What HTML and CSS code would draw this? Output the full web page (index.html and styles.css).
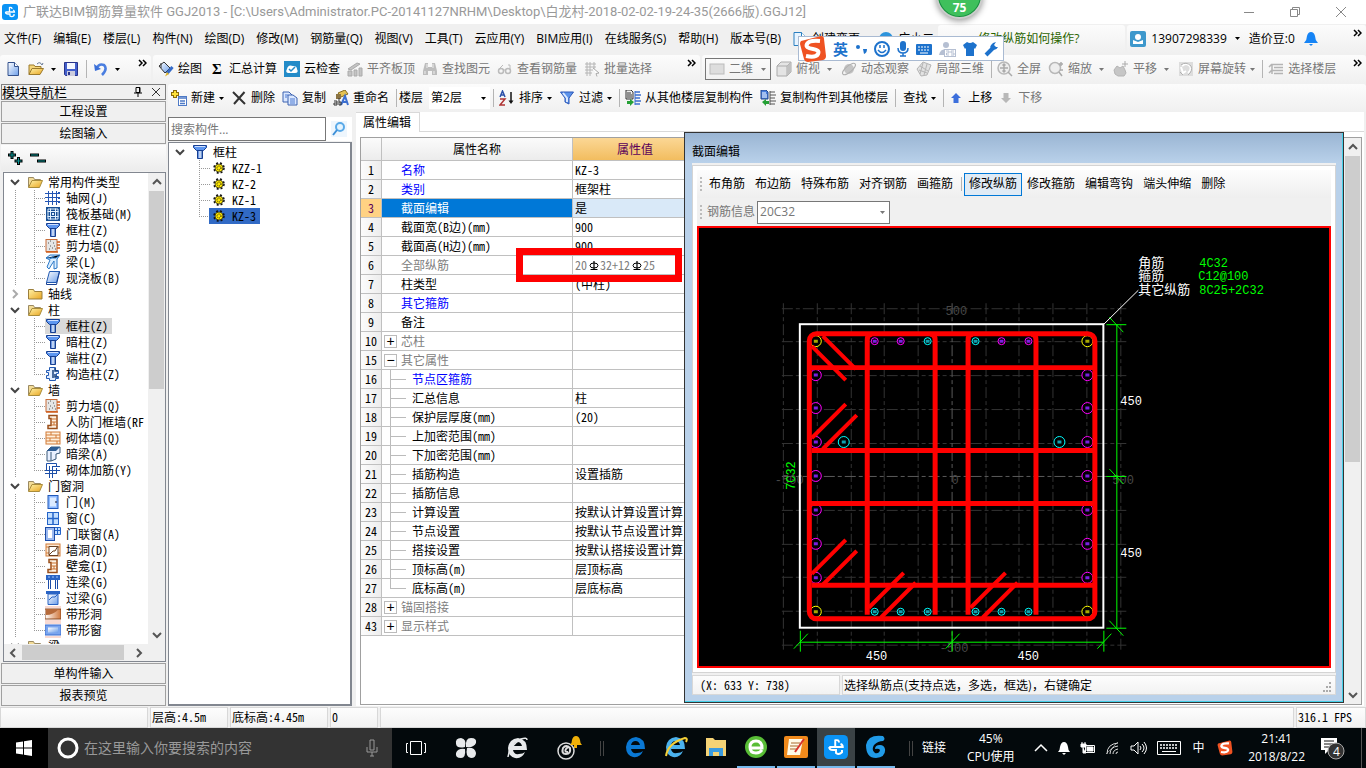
FILE: index.html
```html
<!DOCTYPE html>
<html lang="zh-CN">
<head>
    <meta charset="UTF-8">
    <meta name="viewport" content="width=device-width, initial-scale=1.0">
    <title>广联达BIM钢筋算量软件 GGJ2013</title>
    <link rel="stylesheet" href="styles.css">
</head>
<body>
    <!-- Shared icons -->
    <svg class="defs" width="0" height="0" aria-hidden="true">
        <defs>
            <linearGradient id="gBlue" x1="0" x2="1"><stop offset="0" stop-color="#1f5fd0"/><stop offset=".5" stop-color="#e6f0ff"/><stop offset="1" stop-color="#2c62b8"/></linearGradient>
            <linearGradient id="gGold" x1="0" x2="1" y1="0" y2="1"><stop offset="0" stop-color="#fff2a8"/><stop offset="1" stop-color="#e9a520"/></linearGradient>
            <linearGradient id="gSky" x1="0" x2="1" y1="0" y2="1"><stop offset="0" stop-color="#fff"/><stop offset="1" stop-color="#6d9fea"/></linearGradient>
            <linearGradient id="gBrick" x1="0" x2="1"><stop offset="0" stop-color="#fff"/><stop offset="1" stop-color="#d0763a"/></linearGradient>
        </defs>
        <symbol id="caret" viewBox="0 0 5 3"><path d="M0 0h5L2.500 3z" fill="currentColor"/></symbol>
        <symbol id="more" viewBox="0 0 9 8"><path d="M1 1l3 3-3 3M5 1l3 3-3 3" fill="none" stroke="#000" stroke-width="1.500"/></symbol>
        <symbol id="down" viewBox="0 0 10 10"><path d="M1 3l4 4 4-4" fill="none" stroke="currentColor" stroke-width="2"/></symbol>
        <symbol id="up" viewBox="0 0 10 10"><path d="M1 7l4-4 4 4" fill="none" stroke="currentColor" stroke-width="2"/></symbol>
        <symbol id="right" viewBox="0 0 10 10"><path d="M3 1l4 4-4 4" fill="none" stroke="currentColor" stroke-width="2"/></symbol>
        <symbol id="left" viewBox="0 0 10 10"><path d="M7 1L3 5l4 4" fill="none" stroke="currentColor" stroke-width="2"/></symbol>
        <symbol id="app" viewBox="0 0 16 16"><rect width="16" height="16" rx="3" fill="#0a93f5"/><path d="M7.500 3v5M7.500 3.500q2.500-.5 2.500 1.500M3.500 8h9q0-1.500-1.500-2M3.500 8q0 2 2.500 2h2v2q2 1.500 4-.5v-1.500" fill="none" stroke="#fff" stroke-width="1.300"/></symbol>
        <symbol id="new" viewBox="0 0 16 16"><path d="M3 1.500h6.500l4 4v9H3z" fill="url(#gSky)" stroke="#33518c"/><path d="M9.500 1.500v4h4" fill="#fff" stroke="#33518c"/></symbol>
        <symbol id="newplus" viewBox="0 0 16 16"><path d="M2 1.500h7.500l4 4v9H2z" fill="#e8f4ff" stroke="#2a7fc0"/><path d="M9.500 1.500v4h4" fill="#fff" stroke="#2a7fc0"/><path d="M6 11l5-4v8z" fill="#3bb02a"/></symbol>
        <symbol id="open" viewBox="0 0 16 16"><path d="M1 13.500V4h5l1 1.500h6v2" fill="#f5d67a" stroke="#9c7a2c"/><path d="M1 13.500L4 7.500h11.500L12 13.500z" fill="url(#gGold)" stroke="#9c7a2c"/><path d="M9 3q3-3 5 1l1-2" fill="none" stroke="#637795"/></symbol>
        <symbol id="save" viewBox="0 0 16 16"><path d="M1.500 1.500h13v13h-12l-1-1z" fill="#4360cc" stroke="#28338a"/><path d="M4 2h8v6H4z" fill="#f5f8ff"/><path d="M4 10h8v5H4z" fill="#ccd"/><path d="M5 11h2v3H5z" fill="#28338a"/></symbol>
        <symbol id="undo" viewBox="0 0 16 16"><path d="M4 8Q7 2 12 4q4 4-2 10" fill="none" stroke="#4a7ee0" stroke-width="2.500"/><path d="M2 3l1 7 6-2z" fill="#3a6fd8"/></symbol>
        <symbol id="paint" viewBox="0 0 16 16"><path d="M1 5l5-4 6 6-5 5z" fill="url(#gSky)" stroke="#333"/><path d="M3 2v5" stroke="#333"/><path d="M14.500 6L9 12.500" stroke="#356bc8" stroke-width="3"/><path d="M9 11l2 2-4 2.500z" fill="#e0b325"/></symbol>
        <symbol id="cloud" viewBox="0 0 16 16"><rect width="16" height="16" fill="#238bc8"/><path d="M4 12Q1 11 3 8q1-5 6-3 4 0 4 3 2 4-2 4z" fill="#fff"/><path d="M5 8l2 2 4-4" fill="none" stroke="#238bc8" stroke-width="1.500"/></symbol>
        <symbol id="align" viewBox="0 0 16 16"><path d="M1 8l9-6 3 1-9 6zM1 10h4v5H1zM7 9h3v6H7zM12 7h3v8h-3z" fill="#c4c4c4" stroke="#aaa"/></symbol>
        <symbol id="binoc" viewBox="0 0 16 16"><path d="M3 2h3v4h4V2h3l2 8v4h-5v-4H6v4H1v-4z" fill="#bdbdbd"/><path d="M3 10v3M12 10v3M5 3v4M11 3v4" stroke="#eee"/></symbol>
        <symbol id="glasses" viewBox="0 0 16 16"><circle cx="4" cy="10" r="2.500" fill="none" stroke="#bbb" stroke-width="1.500"/><circle cx="11" cy="10" r="2.500" fill="none" stroke="#bbb" stroke-width="1.500"/><path d="M6 9h3M2 8l4-4M13 9V4h-2" fill="none" stroke="#bbb"/></symbol>
        <symbol id="batch" viewBox="0 0 16 16"><path d="M1 3h11M1 6h11M1 9h8M1 12h7M3 1v14M6 1v14M10 1v7" stroke="#b4b4b4"/><path d="M9 7l6 5-3 .5 1 3" fill="#fff" stroke="#aaa"/></symbol>
        <symbol id="view2d" viewBox="0 0 16 16"><rect x="1" y="3" width="14" height="10" fill="#ddd" stroke="#bbb"/></symbol>
        <symbol id="cube" viewBox="0 0 16 16"><path d="M1 5l4-4h10v10l-4 4H1z" fill="#e4e4e4" stroke="#aaa"/><path d="M1 5h10v10M11 5l4-4" fill="none" stroke="#aaa"/><path d="M11 5l4-4v10l-4 4z" fill="#c0c0c0"/></symbol>
        <symbol id="orbit" viewBox="0 0 16 16"><circle cx="8" cy="8" r="5" fill="#c4c4c4"/><ellipse cx="8" cy="8" rx="8" ry="3" transform="rotate(-40 8 8)" fill="none" stroke="#b0b0b0"/></symbol>
        <symbol id="local3d" viewBox="0 0 16 16"><path d="M1 8l6-7 8 3-4 10-6 1z" fill="#e2e2e2" stroke="#b4b4b4"/><path d="M4 5l8 5M7 2L4 13M11 3L8 14M3 9l8 3" stroke="#b4b4b4"/></symbol>
        <symbol id="zoomfit" viewBox="0 0 16 16"><circle cx="7" cy="7" r="6" fill="#eee" stroke="#b8b8b8" stroke-width="1.500"/><path d="M11 11l4 4M7 3v8M3 7h8M5.500 4.500L7 3l1.500 1.500M5.500 9.500L7 11l1.500-1.500" stroke="#aaa" stroke-width="1.500" fill="none"/></symbol>
        <symbol id="zoom" viewBox="0 0 16 16"><circle cx="7" cy="7" r="5.500" fill="#eee" stroke="#b8b8b8" stroke-width="1.500"/><path d="M11 11l3 4M11 3h4M13 1v4M12 9h3" stroke="#aaa" stroke-width="1.500"/></symbol>
        <symbol id="pan" viewBox="0 0 16 16"><path d="M1 9l3-4 3 2 3-2 2 4 1 3-2 3H5l-3-2z" fill="#c6c6c6" stroke="#b4b4b4"/><path d="M12 0v6M9 3h6" stroke="#aaa"/></symbol>
        <symbol id="rotate" viewBox="0 0 16 16"><rect x="1" y="1" width="14" height="14" fill="#ddd"/><path d="M4 5q4-4 8 0 2 4-2 7M3 6l2 6 3-2" fill="none" stroke="#fff" stroke-width="2"/><path d="M3 4q5-4 10 1 2 5-3 9M2 11l3 3" fill="none" stroke="#b0b0b0"/></symbol>
        <symbol id="floors" viewBox="0 0 16 16"><path d="M4 3.500h11M6 6.500h9M4 9.500h11M6 12.500h9M4 3v10M1 6l3-3M1 12l3-3" stroke="#b4b4b4" stroke-width="1.500"/></symbol>
        <symbol id="create" viewBox="0 0 16 16"><path d="M4 0v8M0 4h8" stroke="#8a6c0c" stroke-width="4"/><path d="M4 1v6M1 4h6" stroke="#ffe23a" stroke-width="2"/><rect x="7.500" y="6.500" width="8" height="9" fill="#fff" stroke="#4e7ac6"/><path d="M7 8h9M9 11h5M9 13.500h5" stroke="#4e7ac6" stroke-width="1.500"/></symbol>
        <symbol id="delete" viewBox="0 0 16 16"><path d="M2 2l12 12M13.500 2L3 14" stroke="#333" stroke-width="2"/></symbol>
        <symbol id="copy" viewBox="0 0 16 16"><path d="M1 2h6l3 3v7H1z" fill="#dbe8ff" stroke="#3c62b0"/><path d="M6 5h5l4 3v7H6z" fill="#dbe8ff" stroke="#3c62b0"/><path d="M8 9h5M8 11h5M8 13h5M3 5h3M3 7h2" stroke="#4b78d0"/></symbol>
        <symbol id="rename" viewBox="0 0 16 16"><path d="M5 3l7-3 3 4-7 3z" fill="#e5c252" stroke="#846a1e"/><path d="M3 4h5v5H3z" fill="#8b7444"/><path d="M8 15l4-9 3 9M9.500 12h4" stroke="#3c6fd0" stroke-width="2" fill="none"/><path d="M1 11h3v4H1v-2h3M6 8v7h2v-3H6" fill="none" stroke="#333"/></symbol>
        <symbol id="sort" viewBox="0 0 16 16"><path d="M1 7l2.500-6L6 7M2 5h3" fill="none" stroke="#2d50a8" stroke-width="1.500"/><path d="M1 9h5l-5 6h5" fill="none" stroke="#b03434" stroke-width="1.500"/><path d="M12 2v10" stroke="#111" stroke-width="1.500"/><path d="M9.500 10.500h5L12 14z" fill="#111"/></symbol>
        <symbol id="filter" viewBox="0 0 16 16"><path d="M1.500 2h13L10 8v6l-4-2V8z" fill="#5c93ea" stroke="#2a56b8"/><path d="M4 3l4 5v4" fill="none" stroke="#dceaff" stroke-width="2"/></symbol>
        <symbol id="copyfrom" viewBox="0 0 16 16"><path d="M1 0h5l2 2v7H1z" fill="#eee" stroke="#333"/><path d="M2 3h4M2 5h5M2 7h5" stroke="#333"/><path d="M10 2h5M10 5h6M10 8h5M10 11h6M10 14h5" stroke="#3d70d0" stroke-width="1.500"/><path d="M10 1v14" stroke="#3d70d0"/><path d="M2 11h3v-2l4 3-4 4v-2H2z" fill="#25a035"/></symbol>
        <symbol id="copyto" viewBox="0 0 16 16"><path d="M1 0h5l2 2v7H1z" fill="#4a80e0" stroke="#24468a"/><path d="M2 3h4M2 5h5M2 7h5" stroke="#fff"/><path d="M10 2h5M10 5h6M10 8h5M10 11h6M10 14h5M10 1v14" stroke="#555"/><path d="M9 11H6V9l-4 3 4 4v-2h3z" fill="#25a035"/></symbol>
        <symbol id="arrowup" viewBox="0 0 12 12"><path d="M6 1l5 5H8.500v5h-5V6H1z" fill="currentColor"/></symbol>
        <symbol id="arrowdown" viewBox="0 0 12 12"><path d="M6 11L1 6h2.500V1h5v5H11z" fill="currentColor"/></symbol>
        <symbol id="folder" viewBox="0 0 16 16"><path d="M1.500 13V3.500h5l1 2h6V8" fill="#f3dc98" stroke="#9b8a62"/><path d="M1.500 13.500L5 6.500h10.500L12.500 13.500z" fill="url(#gGold)" stroke="#a98c3a"/></symbol>
        <symbol id="folderc" viewBox="0 0 16 16"><path d="M1.500 13V3.500h5l1 2h7.500V13z" fill="url(#gGold)" stroke="#9b7f3c"/></symbol>
        <symbol id="axis" viewBox="0 0 16 16"><path d="M0 3.500h14M0 7.500h14M0 11.500h14M3.500 1v14M7.500 1v14M11.500 1v14" stroke="#2456b4"/><path d="M13 2h2v2h-2zM13 7h2v2h-2zM13 11h2v2h-2z" fill="#2456b4"/></symbol>
        <symbol id="raft" viewBox="0 0 16 16"><rect x="1" y="1" width="14" height="14" fill="#184f94"/><path d="M2.500 5.500h11M2.500 10.500h11M5.500 2.500v11M10.500 2.500v11M3 3h10v10H3z" fill="none" stroke="#e2f2ff"/><rect x="7" y="7" width="2" height="2" fill="#e2f2ff"/></symbol>
        <symbol id="column" viewBox="0 0 16 16"><path d="M1.500 1.500h13v2l-3 3h-7l-3-3z" fill="#5d96f0" stroke="#173f92"/><path d="M3 2.500h10" stroke="#cfe0ff"/><path d="M5.500 6.500h5v8h-5z" fill="url(#gBlue)" stroke="#173f92"/></symbol>
        <symbol id="wall" viewBox="0 0 16 16"><rect x="1" y="1.500" width="11" height="12" fill="#e5e5e5" stroke="#c86d39"/><path d="M3 5h1M5 8h1M8 5h1M7 10h1M4 11h1M9 8h1M10 11h1M5 3h1" stroke="#555"/><path d="M12 4h3M12 7h3M12 10h3M1 14h12" stroke="#cf5d1c" stroke-width="1.500"/></symbol>
        <symbol id="beam" viewBox="0 0 16 16"><path d="M1 4l4-3h10l-3 4v9l-3 1V7L7 10l-3 5-2-2 3-7z" fill="#d9edff" stroke="#2b78c8"/><path d="M1 4h10l4-3M5 5l4-3" stroke="#2b78c8"/></symbol>
        <symbol id="slab" viewBox="0 0 16 16"><path d="M4.500 1.500h10l-3 11h-10z" fill="url(#gSky)" stroke="#2159b0"/><path d="M1.500 12.500v2h10l3-13" fill="none" stroke="#173f92"/></symbol>
        <symbol id="gz" viewBox="0 0 16 16"><path d="M4.500 1.500h6v3h3v3h-2v3h2v2h-3v2h-6v-2h-3v-3h2v-3h-2v-2h3z" fill="#e3eeff" stroke="#225ab4"/><path d="M10 2v3h3M10 8v3h3M8 4v8" fill="none" stroke="#17407e" stroke-width="1.500"/></symbol>
        <symbol id="rf" viewBox="0 0 16 16"><path d="M4 1.500h8v13H3v-3h3v-7H4z" fill="#fff3e4" stroke="#9a4f1b" stroke-width="1.500"/><path d="M6 5h6M6 8h6M6 11h6M9 8v3" stroke="#c8702e"/></symbol>
        <symbol id="brick" viewBox="0 0 16 16"><rect x="1" y="2" width="14" height="12" fill="#fff0dc" stroke="#d27b36"/><path d="M1 5h14M1 8h14M1 11h14M6 2v3M11 5v3M5 8v3M12 11v3" stroke="#d27b36"/></symbol>
        <symbol id="abeam" viewBox="0 0 16 16"><path d="M2 5l4-4h9v6l-4 1v5l-5 2H2z" fill="#e8f0ff" stroke="#385878"/><path d="M2 5l4-4h9l-4 4z" fill="#2f5d94"/><path d="M6 6v9" stroke="#385878"/></symbol>
        <symbol id="jj" viewBox="0 0 16 16"><path d="M0 8.500h15M0 11.500h12M4.500 4v12M7.500 4v12M11.500 6v6M1.500 1.500h10v3M1.500 1.500v7M8 4.500h7" fill="none" stroke="#1d4fa8"/></symbol>
        <symbol id="door" viewBox="0 0 16 16"><rect x="3" y="1.500" width="10" height="13" fill="#8cb9ff" stroke="#2159b8"/><rect x="5" y="3.500" width="6" height="9" fill="#dcebff"/><path d="M10 8h2" stroke="#112"/></symbol>
        <symbol id="window" viewBox="0 0 16 16"><rect x="2.500" y="2.500" width="11" height="12" fill="#c3dfff" stroke="#2464c8"/><path d="M8 2v13M3 8.500h10" stroke="#2464c8" stroke-width="1.500"/></symbol>
        <symbol id="doorwin" viewBox="0 0 16 16"><path d="M9 1.500h6.500v7H9z" fill="#c3dfff" stroke="#2464c8"/><path d="M12.500 2v6M9 4.500h6" stroke="#2464c8"/><rect x=".5" y="1.500" width="9" height="13" fill="#9bb9f0" stroke="#1c4ca8"/><rect x="3" y="4" width="4" height="8" fill="#fff"/></symbol>
        <symbol id="hole" viewBox="0 0 16 16"><rect x="1" y="2" width="14" height="12" fill="#fce8d2" stroke="#d27b36"/><path d="M1 5h14M1 11h14" stroke="#d27b36"/><path d="M4 4.500h9v9H4zM4 13l4-4h2l3-5" fill="#fff" stroke="#6a4022"/></symbol>
        <symbol id="link" viewBox="0 0 16 16"><path d="M1 1h14v5H1z" fill="#2a64c4"/><path d="M3 3h2M7 3h2M11 3h2" stroke="#9cc4ff"/><path d="M3.500 6v9M5.500 6v9M10.500 6v9M12.500 6v9" stroke="#1c4ca8"/></symbol>
        <symbol id="lintel" viewBox="0 0 16 16"><path d="M1 1h14v3H1z" fill="#2a64c4"/><path d="M3 4h10v10.500H3z" fill="url(#gSky)" stroke="#2a64c4"/><path d="M4 10l3-3h3l3-3" fill="none" stroke="#2a64c4"/></symbol>
        <symbol id="striphole" viewBox="0 0 16 16"><rect x="0" y="3" width="16" height="10" fill="url(#gBrick)" stroke="#8d491f"/><path d="M1 9Q8 9 14 3H1z" fill="#b66a3a"/><path d="M0 1h16M0 15h16" stroke="#f3b5a5"/></symbol>
        <symbol id="stripwin" viewBox="0 0 16 16"><rect x="0" y="3" width="16" height="10" fill="#7aa5ee" stroke="#3c6fd0"/><rect x="3" y="5.500" width="10" height="5" fill="url(#gSky)"/><path d="M0 1h16M0 15h16" stroke="#f3b5a5"/></symbol>
        <symbol id="gear" viewBox="0 0 12 12"><circle cx="6" cy="6" r="5" fill="none" stroke="#111" stroke-width="1.500" stroke-dasharray="2 2"/><circle cx="6" cy="6" r="4" fill="#ffe800" stroke="#111" stroke-width=".7"/><circle cx="6" cy="6" r="2" fill="none" stroke="#111" stroke-dasharray="1 1"/></symbol>
        <symbol id="rebar" viewBox="0 0 10 10"><ellipse cx="5" cy="4.500" rx="4" ry="2.500" fill="none" stroke="#000"/><path d="M5 0v9M1.500 8.500h7" stroke="#000" stroke-width="1.200"/></symbol>
        <symbol id="sogou" viewBox="0 0 28 28"><path d="M2 6L22 1q3 0 3 3l2 17q0 3-3 4L9 27q-3 0-4-3L1 9q0-2 1-3z" fill="#ef5222"/><path d="M21 6Q10 5 8 9t6 5q7 1 5 5t-12 2" fill="none" stroke="#fff" stroke-width="4"/></symbol>
        <symbol id="ebrowser" viewBox="0 0 24 24"><path d="M21 14H7q1 5 6 4 4 0 6-2-3 7-10 6-7-2-7-10Q3 3 12 2q9 1 9 12zM7 10h9q-1-4-4.500-4T7 10z" fill="currentColor"/></symbol>
    </svg>

    <header class="titlebar">
        <svg class="app-icon"><use href="#app"/></svg>
        <span class="title-text">广联达BIM钢筋算量软件 GGJ2013 - [C:\Users\Administrator.PC-20141127NRHM\Desktop\白龙村-2018-02-02-19-24-35(2666版).GGJ12]</span>
        <div class="window-buttons">
            <button aria-label="最小化"><svg width="12" height="12"><path d="M1 6.500h10" stroke="#888"/></svg></button>
            <button aria-label="还原"><svg width="12" height="12"><path d="M1.500 3.500h7v7h-7zM3.500 3V1.500h7v7H9" fill="none" stroke="#888"/></svg></button>
            <button aria-label="关闭"><svg width="12" height="12"><path d="M1 1l10 10M11 1L1 11" stroke="#888"/></svg></button>
        </div>
    </header>

    <div class="menubar">
        <nav class="menu">
            <button>文件(F)</button><button>编辑(E)</button><button>楼层(L)</button><button>构件(N)</button><button>绘图(D)</button><button>修改(M)</button><button>钢筋量(Q)</button><button>视图(V)</button><button>工具(T)</button><button>云应用(Y)</button><button>BIM应用(I)</button><button>在线服务(S)</button><button>帮助(H)</button><button>版本号(B)</button>
        </nav>
        <button class="tool"><svg class="ic"><use href="#newplus"/></svg>创建变更</button>
        <button class="tool helper"><svg class="ic"><circle cx="8" cy="8" r="7" fill="#2d94dc"/><path d="M4 8h3M9 8h3" stroke="#fff" stroke-width="2"/></svg>广小二</button>
        <div class="strip question"><a href="#">修改纵筋如何操作?</a></div>
        <div class="strip account">
            <button class="tool"><svg class="ic"><rect width="16" height="16" rx="2" fill="#3d98cc"/><circle cx="8" cy="6" r="3" fill="#fff"/><path d="M3 13V9l5 2 5-2v4z" fill="#fff"/></svg>13907298339<svg class="caret"><use href="#caret"/></svg></button>
            <span class="beans">造价豆:0</span>
            <svg class="ic"><path d="M1 12q3-3 3-7 1-4 4-4t4 4q0 4 3 7zM6 13h4l-2 2z" fill="#1684f5"/></svg>
            <button class="overflow" aria-label="更多"><svg class="more"><use href="#more"/></svg></button>
        </div>
    </div>

    <div class="toolbars">
        <div class="strip files">
            <button class="tool" aria-label="新建工程"><svg class="ic"><use href="#new"/></svg></button>
            <button class="tool" aria-label="打开"><svg class="ic"><use href="#open"/></svg><svg class="caret"><use href="#caret"/></svg></button>
            <button class="tool" aria-label="保存"><svg class="ic"><use href="#save"/></svg></button>
            <span class="sep"></span>
            <button class="tool" aria-label="撤销"><svg class="ic"><use href="#undo"/></svg><svg class="caret"><use href="#caret"/></svg></button>
            <button class="overflow" aria-label="更多"><svg class="more"><use href="#more"/></svg></button>
        </div>
        <div class="strip draw">
            <button class="tool"><svg class="ic"><use href="#paint"/></svg>绘图</button>
            <button class="tool"><b class="sigma">Σ</b>汇总计算</button>
            <button class="tool"><svg class="ic"><use href="#cloud"/></svg>云检查</button>
            <button class="tool off"><svg class="ic"><use href="#align"/></svg>平齐板顶</button>
            <button class="tool off"><svg class="ic"><use href="#binoc"/></svg>查找图元</button>
            <button class="tool off"><svg class="ic"><use href="#glasses"/></svg>查看钢筋量</button>
            <button class="tool off"><svg class="ic"><use href="#batch"/></svg>批量选择</button>
            <button class="overflow" aria-label="更多"><svg class="more"><use href="#more"/></svg></button>
        </div>
        <div class="strip view">
            <button class="tool off boxed"><svg class="ic"><use href="#view2d"/></svg>二维<svg class="caret"><use href="#caret"/></svg></button>
            <button class="tool off"><svg class="ic"><use href="#cube"/></svg>俯视<svg class="caret wide"><use href="#caret"/></svg></button>
            <button class="tool off"><svg class="ic"><use href="#orbit"/></svg>动态观察</button>
            <button class="tool off"><svg class="ic"><use href="#local3d"/></svg>局部三维</button>
            <span class="sep"></span>
            <button class="tool off"><svg class="ic"><use href="#zoomfit"/></svg>全屏</button>
            <button class="tool off"><svg class="ic"><use href="#zoom"/></svg>缩放<svg class="caret wide"><use href="#caret"/></svg></button>
            <button class="tool off"><svg class="ic"><use href="#pan"/></svg>平移<svg class="caret wide"><use href="#caret"/></svg></button>
            <button class="tool off"><svg class="ic"><use href="#rotate"/></svg>屏幕旋转<svg class="caret"><use href="#caret"/></svg></button>
            <span class="sep"></span>
            <button class="tool off"><svg class="ic"><use href="#floors"/></svg>选择楼层</button>
            <button class="overflow" aria-label="更多"><svg class="more"><use href="#more"/></svg></button>
        </div>
    </div>

    <main class="workspace">
        <aside class="dock">
            <div class="dock-title">模块导航栏
                <svg width="10" height="12"><path d="M3 1.500h4v5H3zM1 7h8M5 7v4M6.500 2v4" fill="none" stroke="#000"/></svg>
                <svg width="10" height="12"><path d="M1 2l8 8M9 2l-8 8" stroke="#333"/></svg>
            </div>
            <button class="dock-tab">工程设置</button>
            <button class="dock-tab">绘图输入</button>
            <div class="dock-tools">
                <button aria-label="展开"><svg width="16" height="16"><path d="M5 1v8M1 5h8M11.500 7v8M7.500 11h8" stroke="#000" stroke-width="3"/><path d="M5 2v6M2 5h6M11.500 8v6M8.500 11h6" stroke="#089090"/></svg></button>
                <button aria-label="折叠"><svg width="18" height="16"><path d="M1 5h9M8 11h9" stroke="#000" stroke-width="3"/><path d="M2 5h7M9 11h7" stroke="#089090"/></svg></button>
            </div>
            <div class="tree-box">
                <div class="tree-view">
                    <ul class="tree">
                        <li><a href="#"><svg class="exp"><use href="#down"/></svg><svg class="ic"><use href="#folder"/></svg>常用构件类型</a>
                            <ul>
                                <li><a href="#"><svg class="ic"><use href="#axis"/></svg>轴网(J)</a></li>
                                <li><a href="#"><svg class="ic"><use href="#raft"/></svg>筏板基础(M)</a></li>
                                <li><a href="#"><svg class="ic"><use href="#column"/></svg>框柱(Z)</a></li>
                                <li><a href="#"><svg class="ic"><use href="#wall"/></svg>剪力墙(Q)</a></li>
                                <li><a href="#"><svg class="ic"><use href="#beam"/></svg>梁(L)</a></li>
                                <li><a href="#"><svg class="ic"><use href="#slab"/></svg>现浇板(B)</a></li>
                            </ul>
                        </li>
                        <li><a href="#"><svg class="exp closed"><use href="#right"/></svg><svg class="ic"><use href="#folderc"/></svg>轴线</a></li>
                        <li><a href="#"><svg class="exp"><use href="#down"/></svg><svg class="ic"><use href="#folder"/></svg>柱</a>
                            <ul>
                                <li><a href="#" class="current"><svg class="ic"><use href="#column"/></svg>框柱(Z)</a></li>
                                <li><a href="#"><svg class="ic"><use href="#column"/></svg>暗柱(Z)</a></li>
                                <li><a href="#"><svg class="ic"><use href="#column"/></svg>端柱(Z)</a></li>
                                <li><a href="#"><svg class="ic"><use href="#gz"/></svg>构造柱(Z)</a></li>
                            </ul>
                        </li>
                        <li><a href="#"><svg class="exp"><use href="#down"/></svg><svg class="ic"><use href="#folder"/></svg>墙</a>
                            <ul>
                                <li><a href="#"><svg class="ic"><use href="#wall"/></svg>剪力墙(Q)</a></li>
                                <li><a href="#"><svg class="ic"><use href="#rf"/></svg>人防门框墙(RF</a></li>
                                <li><a href="#"><svg class="ic"><use href="#brick"/></svg>砌体墙(Q)</a></li>
                                <li><a href="#"><svg class="ic"><use href="#abeam"/></svg>暗梁(A)</a></li>
                                <li><a href="#"><svg class="ic"><use href="#jj"/></svg>砌体加筋(Y)</a></li>
                            </ul>
                        </li>
                        <li><a href="#"><svg class="exp"><use href="#down"/></svg><svg class="ic"><use href="#folder"/></svg>门窗洞</a>
                            <ul>
                                <li><a href="#"><svg class="ic"><use href="#door"/></svg>门(M)</a></li>
                                <li><a href="#"><svg class="ic"><use href="#window"/></svg>窗(C)</a></li>
                                <li><a href="#"><svg class="ic"><use href="#doorwin"/></svg>门联窗(A)</a></li>
                                <li><a href="#"><svg class="ic"><use href="#hole"/></svg>墙洞(D)</a></li>
                                <li><a href="#"><svg class="ic"><use href="#rf"/></svg>壁龛(I)</a></li>
                                <li><a href="#"><svg class="ic"><use href="#link"/></svg>连梁(G)</a></li>
                                <li><a href="#"><svg class="ic"><use href="#lintel"/></svg>过梁(G)</a></li>
                                <li><a href="#"><svg class="ic"><use href="#striphole"/></svg>带形洞</a></li>
                                <li><a href="#"><svg class="ic"><use href="#stripwin"/></svg>带形窗</a></li>
                            </ul>
                        </li>
                        <li><a href="#"><svg class="exp"><use href="#down"/></svg><svg class="ic"><use href="#folder"/></svg>梁</a></li>
                    </ul>
                    <div class="vscroll"><svg class="arrow"><use href="#up"/></svg><div class="thumb"></div><svg class="arrow"><use href="#down"/></svg></div>
                </div>
                <div class="hscroll"><svg class="arrow"><use href="#left"/></svg><div class="thumb"></div><svg class="arrow"><use href="#right"/></svg></div>
            </div>
            <button class="dock-tab">单构件输入</button>
            <button class="dock-tab">报表预览</button>
        </aside>

        <section class="content">
            <div class="strip component-tools">
                <button class="tool"><svg class="ic"><use href="#create"/></svg>新建<svg class="caret"><use href="#caret"/></svg></button>
                <button class="tool"><svg class="ic"><use href="#delete"/></svg>删除</button>
                <button class="tool"><svg class="ic"><use href="#copy"/></svg>复制</button>
                <button class="tool"><svg class="ic"><use href="#rename"/></svg>重命名</button>
                <span class="sep"></span>
                <label for="floor">楼层</label>
                <span class="combo floor-combo"><select id="floor"><option>第2层</option></select><svg class="caret"><use href="#caret"/></svg></span>
                <span class="sep"></span>
                <button class="tool"><svg class="ic"><use href="#sort"/></svg>排序<svg class="caret"><use href="#caret"/></svg></button>
                <button class="tool"><svg class="ic"><use href="#filter"/></svg>过滤<svg class="caret"><use href="#caret"/></svg></button>
                <span class="sep"></span>
                <button class="tool"><svg class="ic"><use href="#copyfrom"/></svg>从其他楼层复制构件</button>
                <button class="tool"><svg class="ic"><use href="#copyto"/></svg>复制构件到其他楼层</button>
                <span class="sep"></span>
                <button class="tool find">查找<svg class="caret"><use href="#caret"/></svg></button>
                <span class="sep"></span>
                <button class="tool move"><svg class="ic12 blue"><use href="#arrowup"/></svg>上移</button>
                <button class="tool move off"><svg class="ic12 grey"><use href="#arrowdown"/></svg>下移</button>
            </div>

            <div class="panels">
                <div class="component-panel">
                    <div class="search">
                        <input type="text" placeholder="搜索构件..." aria-label="搜索构件">
                        <button aria-label="搜索"><svg class="ic"><rect width="16" height="16" fill="#eef6fd"/><circle cx="9" cy="6" r="4" fill="#e4f4ff" stroke="#59a9e8" stroke-width="2"/><path d="M6 9l-4 5" stroke="#3c8fd8" stroke-width="2"/></svg></button>
                    </div>
                    <ul class="tree component-tree">
                        <li><a href="#"><svg class="exp"><use href="#down"/></svg><svg class="ic"><use href="#column"/></svg>框柱</a>
                            <ul>
                                <li><a href="#"><svg class="ic12"><use href="#gear"/></svg>KZZ-1</a></li>
                                <li><a href="#"><svg class="ic12"><use href="#gear"/></svg>KZ-2</a></li>
                                <li><a href="#"><svg class="ic12"><use href="#gear"/></svg>KZ-1</a></li>
                                <li><a href="#" class="picked"><svg class="ic12"><use href="#gear"/></svg>KZ-3</a></li>
                            </ul>
                        </li>
                    </ul>
                </div>

                <div class="property-panel">
                    <div class="tabs"><button class="tab">属性编辑</button></div>
                    <div class="property-body">
                        <div class="sheet">
                            <table class="props">
                                <thead>
                                    <tr><th class="num"></th><th>属性名称</th><th class="active">属性值</th></tr>
                                </thead>
                                <tbody>
                                    <tr><th>1</th><td class="blue">名称</td><td>KZ-3</td></tr>
                                    <tr><th>2</th><td class="blue">类别</td><td>框架柱</td></tr>
                                    <tr class="selected"><th>3</th><td>截面编辑</td><td>是</td></tr>
                                    <tr><th>4</th><td>截面宽(B边)(mm)</td><td>900</td></tr>
                                    <tr><th>5</th><td>截面高(H边)(mm)</td><td>900</td></tr>
                                    <tr class="dim"><th>6</th><td>全部纵筋</td><td>20<svg class="rebar"><use href="#rebar"/></svg>32+12<svg class="rebar"><use href="#rebar"/></svg>25</td></tr>
                                    <tr><th>7</th><td>柱类型</td><td>(中柱)</td></tr>
                                    <tr><th>8</th><td class="blue">其它箍筋</td><td></td></tr>
                                    <tr><th>9</th><td>备注</td><td></td></tr>
                                    <tr class="parent"><th>10</th><td><button>+</button>芯柱</td><td></td></tr>
                                    <tr class="parent"><th>15</th><td><button>−</button>其它属性</td><td></td></tr>
                                    <tr class="sub"><th>16</th><td class="blue">节点区箍筋</td><td></td></tr>
                                    <tr class="sub"><th>17</th><td>汇总信息</td><td>柱</td></tr>
                                    <tr class="sub"><th>18</th><td>保护层厚度(mm)</td><td>(20)</td></tr>
                                    <tr class="sub"><th>19</th><td>上加密范围(mm)</td><td></td></tr>
                                    <tr class="sub"><th>20</th><td>下加密范围(mm)</td><td></td></tr>
                                    <tr class="sub"><th>21</th><td>插筋构造</td><td>设置插筋</td></tr>
                                    <tr class="sub"><th>22</th><td>插筋信息</td><td></td></tr>
                                    <tr class="sub"><th>23</th><td>计算设置</td><td>按默认计算设置计算</td></tr>
                                    <tr class="sub"><th>24</th><td>节点设置</td><td>按默认节点设置计算</td></tr>
                                    <tr class="sub"><th>25</th><td>搭接设置</td><td>按默认搭接设置计算</td></tr>
                                    <tr class="sub"><th>26</th><td>顶标高(m)</td><td>层顶标高</td></tr>
                                    <tr class="sub last"><th>27</th><td>底标高(m)</td><td>层底标高</td></tr>
                                    <tr class="parent"><th>28</th><td><button>+</button>锚固搭接</td><td></td></tr>
                                    <tr class="parent"><th>43</th><td><button>+</button>显示样式</td><td></td></tr>
                                </tbody>
                            </table>
                            <div class="mark"></div>
                        </div>
                        <div class="vscroll long"><svg class="arrow"><use href="#up"/></svg><div class="thumb"></div><svg class="arrow"><use href="#down"/></svg></div>
                    </div>
                </div>
            </div>
        </section>
    </main>

    <footer class="statusbar">
        <span class="cell s1"></span><span class="cell s2">层高:4.5m</span><span class="cell s3">底标高:4.45m</span><span class="cell s4">0</span><span class="cell grow"></span><span class="cell s5">316.1 FPS</span>
    </footer>

    <!-- Section editor window -->
    <div class="dialog" role="dialog" aria-label="截面编辑">
        <div class="dialog-title">截面编辑</div>
        <div class="dialog-body">
            <div class="dialog-frame">
                <div class="dialog-tools">
                    <span class="grip"></span>
                    <button>布角筋</button><button>布边筋</button><button>特殊布筋</button><button>对齐钢筋</button><button>画箍筋</button>
                    <span class="sep"></span>
                    <button class="pressed">修改纵筋</button><button>修改箍筋</button><button>编辑弯钩</button><button>端头伸缩</button><button>删除</button>
                </div>
                <div class="dialog-tools info">
                    <span class="grip"></span>
                    <label for="bar">钢筋信息</label>
                    <span class="combo bar-combo"><select id="bar"><option>20C32</option></select><svg class="caret"><use href="#caret"/></svg></span>
                </div>
                <div class="canvas">
                    <svg viewBox="699 228 631 438" preserveAspectRatio="xMidYMid meet">
                        <g class="grid">
                            <path d="M783.500 303v347M817.500 303v347M851.500 303v347M884.500 303v347M918.500 303v347M986.500 303v347M1019.500 303v347M1053.500 303v347M1087.500 303v347M1121.500 303v347"/>
                            <path d="M782 308.500h345M782 341.500h345M782 375.500h345M782 409.500h345M782 443.500h345M782 510.500h345M782 544.500h345M782 577.500h345M782 611.500h345M782 645.500h345"/>
                            <path class="main" d="M952.500 303v347M782 476.500h345"/>
                        </g>
                        <g class="ghost">
                            <text x="946" y="315">500</text><text x="775" y="484">-500</text><text x="952" y="484">0</text><text x="1113" y="484">500</text><text x="940" y="652">-500</text>
                        </g>
                        <rect x="800" y="324" width="304" height="304" fill="none" stroke="#fff" stroke-width="2"/>
                        <g class="bars yellow"><circle cx="816" cy="341" r="5.500"/><circle cx="1088" cy="341" r="5.500"/><circle cx="816" cy="612" r="5.500"/><circle cx="1088" cy="612" r="5.500"/></g>
                        <g class="bars magenta">
                            <circle cx="816" cy="375" r="5.500"/><circle cx="816" cy="408" r="5.500"/><circle cx="816" cy="442" r="5.500"/><circle cx="816" cy="476" r="5.500"/><circle cx="816" cy="510" r="5.500"/><circle cx="816" cy="544" r="5.500"/><circle cx="816" cy="578" r="5.500"/>
                            <circle cx="1088" cy="375" r="5.500"/><circle cx="1088" cy="408" r="5.500"/><circle cx="1088" cy="442" r="5.500"/><circle cx="1088" cy="476" r="5.500"/><circle cx="1088" cy="510" r="5.500"/><circle cx="1088" cy="544" r="5.500"/><circle cx="1088" cy="578" r="5.500"/>
                            <circle cx="875" cy="341" r="3.500"/><circle cx="901" cy="341" r="3.500"/><circle cx="1002" cy="341" r="3.500"/><circle cx="1029" cy="341" r="3.500"/>
                        </g>
                        <g class="bars cyan">
                            <circle cx="844" cy="442" r="5.500"/><circle cx="1060" cy="442" r="5.500"/>
                            <circle cx="928" cy="341" r="3.500"/><circle cx="976" cy="341" r="3.500"/>
                            <circle cx="875" cy="612" r="3.500"/><circle cx="901" cy="612" r="3.500"/><circle cx="928" cy="612" r="3.500"/><circle cx="976" cy="612" r="3.500"/><circle cx="1002" cy="612" r="3.500"/><circle cx="1029" cy="612" r="3.500"/>
                        </g>
                        <g class="cores">
                            <path stroke="#a8a800" d="M814 341h4M1086 341h4M814 612h4M1086 612h4"/>
                            <path stroke="#7a20e0" d="M814 375h4M814 408h4M814 442h4M814 476h4M814 510h4M814 544h4M814 578h4M1086 375h4M1086 408h4M1086 442h4M1086 476h4M1086 510h4M1086 544h4M1086 578h4M873 341h4M899 341h4M1000 341h4M1027 341h4"/>
                            <path stroke="#10a0b0" d="M842 442h4M1058 442h4M926 341h4M974 341h4M873 612h4M899 612h4M926 612h4M974 612h4M1000 612h4M1027 612h4"/>
                        </g>
                        <g class="stirrups">
                            <rect x="809.500" y="333.500" width="286" height="285.500" rx="7"/>
                            <path d="M809 367.500h286M812 450.500h283M809 503.500h286M812 585.500h283"/>
                            <path d="M867.500 615V340q0-6 5-6M935.500 615V340q0-6-5-6M968.500 615V340q0-6 5-6M1036.500 615V340q0-6-5-6"/>
                            <path d="M812 346l34 34M823 336l33 33M812 438l34-34M823 449l34-34M812 574l34-34M823 585l34-34M869 608l35-35M881 618l35-35M971 608l35-35M983 618l35-35" stroke-width="4"/>
                        </g>
                        <g class="dims">
                            <path d="M1117.500 324v304M1107 324.500h20M1107 476.500h20M1107 628.500h20M1110 317l14 15M1110 469l14 15M1110 621l14 15"/>
                            <path d="M800 642.500h304M800.500 631v21M952.500 631v21M1104.500 631v21M794 649l14-15M946 649l14-15M1098 649l14-15"/>
                        </g>
                        <path d="M1104.500 324L1139 290" stroke="#fff"/>
                        <g class="white">
                            <text x="1121" y="405">450</text><text x="1121" y="557">450</text><text x="866" y="660">450</text><text x="1018" y="660">450</text>
                            <text class="key" x="1139" y="267">角筋</text><text class="key" x="1139" y="280">箍筋</text><text class="key" x="1139" y="294">其它纵筋</text>
                        </g>
                        <g class="green">
                            <text x="1200" y="267">4C32</text><text x="1199" y="280">C12@100</text><text x="1200" y="294">8C25+2C32</text>
                            <text transform="translate(795 490) rotate(-90)">7C32</text>
                        </g>
                    </svg>
                </div>
            </div>
            <div class="dialog-status"><span class="cell coords">(X: 633 Y: 738)</span><span class="cell grow hint">选择纵筋点(支持点选，多选，框选)，右键确定<svg width="14" height="14"><path d="M9 3h2M6 7h2M9 7h2M3 11h2M6 11h2M9 11h2" stroke="#aaa" stroke-width="2"/></svg></span></div>
        </div>
    </div>

    <!-- Floating input method bar and speed ball -->
    <div class="ime">
        <svg class="ime-logo"><use href="#sogou"/></svg>
        <b>英</b>
        <svg width="14" height="16"><circle cx="4" cy="6" r="2" fill="#1d72cc"/><path d="M9 8h4q0 4-3 5" fill="#1d72cc"/></svg>
        <svg width="16" height="16"><circle cx="8" cy="8" r="7" fill="none" stroke="#1d72cc" stroke-width="2"/><path d="M6 4v3M10 4v3M4 9q4 5 8 0" fill="none" stroke="#1d72cc" stroke-width="1.500"/></svg>
        <svg width="14" height="16"><rect x="4" y="0" width="6" height="10" rx="3" fill="#1d72cc"/><path d="M2 7q0 5 5 5t5-5M7 12v3M4 15h6" fill="none" stroke="#1d72cc" stroke-width="1.500"/></svg>
        <svg width="16" height="16"><rect x="0" y="3" width="16" height="11" rx="1" fill="#1d72cc"/><path d="M2 6h12M2 9h12" stroke="#fff" stroke-dasharray="2 1"/><path d="M4 12h8" stroke="#fff"/></svg>
        <svg width="18" height="16"><circle cx="8" cy="4" r="3" fill="#b5bfd2"/><path d="M1 14Q2 8 8 8q4 0 5 3v3z" fill="#b5bfd2"/><rect x="6.500" y="8.500" width="11" height="7" fill="#fff" stroke="#b5bfd2"/><path d="M8 10h3v2H8.500v2H11M16 10h-3v2h3v2h-3" fill="none" stroke="#b5bfd2"/></svg>
        <svg width="16" height="16"><path d="M1 4l4-3q3 2 6 0l4 3-2 4-1-1v8H4V7L3 8z" fill="#1d72cc"/></svg>
        <svg width="16" height="16"><path d="M2 14l7-7" stroke="#1d72cc" stroke-width="4"/><path d="M14 6q-2 4-6 2T9 2l3-1-2 3 2 2z" fill="#1d72cc"/></svg>
    </div>
    <div class="ball">75</div>

    <div class="taskbar">
        <button class="start" aria-label="开始"><svg width="16" height="16"><path d="M0 2.500l7-1v6H0zM8 1.300L16 0v7.500H8zM0 8.500h7v6l-7-1zM8 8.500h8V16l-8-1.300z" fill="#fff"/></svg></button>
        <label class="task-search"><svg width="22" height="22"><circle cx="11" cy="11" r="9" fill="none" stroke="#fff" stroke-width="3"/></svg><input type="text" placeholder="在这里输入你要搜索的内容" aria-label="搜索"><svg width="12" height="18"><path d="M4 1h4v10H4zM1 8v5h10V8M6 13v4M4 17h4" fill="none" stroke="#999"/></svg></label>
        <button class="tview" aria-label="任务视图"><svg width="22" height="16"><path d="M5.500 1.500h11v13h-11zM3 3.500H1.500v9H3M19 3.500h1.500v9H19" fill="none" stroke="#fff"/></svg></button>
        <div class="pins">
            <button aria-label="风扇"><svg width="24" height="24"><g fill="#e8eaec"><path d="M11 11Q3 13 2 8q-1-6 5-6 6 1 4 9z"/><path d="M12 11Q11 2 17 2q6 0 5 5-2 5-10 4z"/><path d="M13 12q8-1 9 5 0 5-5 5-6-1-4-10z"/><path d="M11 13q1 9-4 9-6 0-5-5 2-5 9-4z"/></g></svg></button>
            <button class="pale" aria-label="浏览器"><svg width="24" height="24"><use href="#ebrowser"/><path d="M2 21Q3 10 15 3q6-2 6 1" fill="none" stroke="#e8eaec" stroke-width="1.500"/></svg></button>
            <button aria-label="提醒"><svg width="28" height="28"><circle cx="10" cy="17" r="8" fill="none" stroke="#ddd" stroke-width="1.500"/><path d="M14 14q-4-4-7 0-2 6 3 6 5 0 4-6-2-2-4 1t2 3" fill="none" stroke="#ddd" stroke-width="2"/><path d="M14 11q2-2 2-5 1-4 4-4t4 4q0 3 2 5zM18 11h3v3h-3z" fill="#f0b008"/></svg></button>
        </div>
        <span class="tsep"></span>
        <div class="apps">
            <button class="edge" aria-label="Edge"><svg width="24" height="24"><use href="#ebrowser"/></svg></button>
            <button class="ie" aria-label="Internet Explorer"><svg width="24" height="24"><use href="#ebrowser"/><path d="M2 21Q4 8 21 3q3 0 1 4" fill="none" stroke="#f4cf38" stroke-width="2"/></svg></button>
            <button aria-label="文件夹"><svg width="24" height="24"><path d="M2 3h7l2 2h11v16H2z" fill="#f5d376"/><path d="M5 21v-8h14v8h-4v-4H9v4z" fill="#3a9be0"/></svg></button>
            <button class="running" aria-label="360浏览器"><svg width="24" height="24"><circle cx="12" cy="12" r="11" fill="#58bd36"/><g fill="none" stroke="#fff" stroke-width="3"><path d="M5 13h13q0-7-6-7t-6 6 6 6q4 0 6-3"/></g></svg></button>
            <button class="running" aria-label="记事本"><svg width="24" height="24"><rect x="0" y="1" width="24" height="22" rx="2" fill="#f08a1c"/><path d="M5 4h14l-3 16H3z" fill="#fffbe8"/><path d="M7 8h9M6 11h8M6 14h7" stroke="#a86a2c"/><path d="M20 4l-9 13" stroke="#d8352c" stroke-width="2"/></svg></button>
            <button class="running active" aria-label="广联达"><svg width="24" height="24"><use href="#app"/></svg></button>
            <button class="running" aria-label="G+"><svg width="24" height="24"><path d="M19 1Q4-1 2 10q0 13 10 13 10-1 9-9-1-4-5-4-5 0-5 4 4-1 5 1-1 4-5 3-4-3-1-8 4-4 9-4 3-2 0-5z" fill="#209be8"/></svg></button>
        </div>
        <span class="tsep"></span>
        <a href="#" class="links">链接</a>
        <div class="cpu">45%<br>CPU使用</div>
        <div class="tray">
            <svg width="14" height="14"><path d="M1 10l6-6 6 6" fill="none" stroke="#fff" stroke-width="1.500"/></svg>
            <svg width="14" height="14"><path d="M1 11q2-2 2-5 1-5 4-5t4 5q0 3 2 5zM5 12h4l-2 2z" fill="#fff"/></svg>
            <svg width="16" height="14"><path d="M5.500 4.500h9v7h-9z" fill="none" stroke="#fff"/><path d="M7 6h6v4H7zM1 3h5v3H1zM3 6v6h3M2 1v2M5 1v2" fill="#fff" stroke="#fff"/></svg>
            <svg width="16" height="14"><path d="M2 13Q2 3 13 2M5 13q0-7 8-8M8 13q0-4 5-5M11 13q0-2 2-2" fill="none" stroke="#ddd"/><path d="M1 13L13 1" stroke="#ddd" stroke-width=".5"/></svg>
            <svg width="18" height="14"><path d="M1 5h3l4-4v12L4 9H1zM10 5q2 2 0 4M12 3q4 4 0 8M14 1q5 6 0 12" fill="none" stroke="#fff"/></svg>
            <svg width="24" height="14"><path d="M.5.500h23v13H.5z" fill="none" stroke="#fff"/><path d="M3 4h18M3 7h18" stroke="#fff" stroke-width="1.500" stroke-dasharray="2 1"/><path d="M5 10.500h14" stroke="#fff"/></svg>
            <span>中</span>
            <svg width="16" height="16"><use href="#sogou"/></svg>
        </div>
        <div class="clock">21:41<br>2018/8/22</div>
        <button class="notice" aria-label="通知"><svg width="26" height="26"><path d="M1 3h16v12H9l-4 4v-4H1z" fill="#fff"/><path d="M4 6h10M4 9h10M4 12h7" stroke="#111"/><circle cx="16" cy="16" r="8" fill="#333" stroke="#aaa"/><text x="13" y="21">4</text></svg></button>
    </div>
</body>
</html>
```
FILE: styles.css
```css
* {
    box-sizing: border-box;
}
body {
    margin: 0;
    height: 100vh;
    display: flex;
    flex-direction: column;
    overflow: hidden;
    background: #f0f0f0;
    color: #000;
    font: 12px/16px "Open Sans", "Noto Sans CJK SC", sans-serif;
}
button, input, select {
    font: inherit;
    color: inherit;
    margin: 0;
    padding: 0;
    border: 0;
    background: none;
}
a {
    color: inherit;
    text-decoration: none;
}
ul {
    list-style: none;
    margin: 0;
    padding: 0;
}
svg {
    flex: none;
}
.defs {
    position: absolute;
}
.ic {
    width: 16px;
    height: 16px;
}
.ic12 {
    width: 12px;
    height: 12px;
}
.caret {
    width: 5px;
    height: 3px;
}
.more {
    width: 9px;
    height: 8px;
}

/* Title bar */
.titlebar {
    display: flex;
    align-items: center;
    height: 24px;
    padding-left: 2px;
    background: #fff;
    color: #999;
}
.app-icon {
    width: 16px;
    height: 16px;
    margin-right: 5px;
}
.title-text {
    font-family: Roboto, "Noto Sans CJK SC", sans-serif;
    font-size: 13px;
    white-space: nowrap;
}
.window-buttons {
    display: flex;
    gap: 34px;
    margin-left: auto;
    padding-right: 19px;
}
.window-buttons svg {
    display: block;
}

/* Menu and toolbars */
.menubar, .toolbars, .strip, .menu, .tool {
    display: flex;
    align-items: center;
    white-space: nowrap;
}
.menubar {
    height: 29px;
    margin-bottom: 1px;
}
.menu {
    gap: 12px;
    padding: 0 8px 0 4px;
}
.strip {
    height: 28px;
    background: linear-gradient(#fcfcfc, #f0f0f0);
    border-radius: 3px;
}
.tool {
    gap: 4px;
    height: 22px;
    padding: 0 4px 0 3px;
}
.tool .wide {
    margin: 0 2px 0 3px;
}
.off {
    color: #777;
}
.sep {
    width: 1px;
    height: 18px;
    margin: 0 2px 0 3px;
    background: #b4b4b4;
}
.helper {
    margin-left: 11px;
}
.question {
    margin-left: auto;
    width: 188px;
    padding-left: 40px;
    color: #2a6400;
}
.account {
    width: 240px;
    margin-left: 2px;
}
.account .tool {
    gap: 5px;
}
.account .caret {
    margin-left: 3px;
}
.beans {
    margin: 0 8px 0 5px;
}
.overflow {
    margin-left: auto;
    padding: 0 4px 12px;
}
.toolbars {
    height: 30px;
    gap: 2px;
}
.files {
    width: 151px;
    padding-left: 2px;
}
.files .tool {
    gap: 7px;
}
.draw {
    width: 547px;
    padding-left: 2px;
}
.sigma {
    width: 16px;
    text-align: center;
    font: bold 15px/16px "Liberation Serif", serif;
}
.view {
    flex: 1;
    padding-left: 3px;
}
.boxed {
    margin-right: 2px;
    border: 1px solid #777;
    padding-left: 3px;
}
.boxed .caret {
    margin-left: 4px;
}

/* Work area */
.workspace {
    flex: 1;
    min-height: 0;
    display: flex;
}
.dock {
    flex: none;
    width: 166px;
    margin-right: 2px;
    padding: 0 0 1px 1px;
    display: flex;
    flex-direction: column;
    gap: 1px;
}
.dock-title {
    display: flex;
    align-items: center;
    gap: 8px;
    height: 16px;
    padding-right: 4px;
    border: 1px solid #808080;
    font-size: 13px;
    line-height: 14px;
    white-space: nowrap;
}
.dock-title svg:first-of-type {
    margin-left: auto;
}
.dock-tab {
    flex: none;
    height: 21px;
    border: 1px solid #a0a0a0;
    background: #f0f0f0;
    line-height: 18px;
}
.dock-tools {
    display: flex;
    align-items: center;
    gap: 6px;
    height: 26px;
    padding-left: 6px;
    background: linear-gradient(#fcfcfc, #ececec);
}
.dock-tools svg {
    display: block;
}
.tree-box {
    flex: 1;
    min-height: 0;
    display: flex;
    flex-direction: column;
    margin-left: 2px;
    border: 1px solid #828790;
    background: #fff;
}
.tree-view {
    flex: 1;
    min-height: 0;
    display: flex;
    overflow: hidden;
}
.tree {
    flex: 1;
    min-width: 0;
    padding-top: 1px;
    overflow: hidden;
}
.tree, .props, .statusbar, .dialog-status {
    font-family: "Noto Sans CJK SC", sans-serif;
    font-feature-settings: "hwid";
}
.tree a {
    display: inline-flex;
    align-items: center;
    vertical-align: top;
    gap: 5px;
    height: 16px;
    padding-right: 4px;
    white-space: nowrap;
}
.tree li {
    line-height: 16px;
}
.tree > li > a {
    padding-left: 6px;
}
.exp {
    width: 10px;
    height: 10px;
    margin-right: 2px;
    color: #444;
}
.closed {
    color: #aaa;
}
.tree ul {
    background: repeating-linear-gradient(#999 0 1px, transparent 1px 2px) 11px 0 / 1px 100% no-repeat;
}
.tree ul li {
    height: 16px;
    padding-left: 41px;
    background: repeating-linear-gradient(#999 0 1px, transparent 1px 2px) 30px 0 / 1px 100% no-repeat, repeating-linear-gradient(90deg, #999 0 1px, transparent 1px 2px) 30px 8px / 11px 1px no-repeat;
}
.tree ul li:last-child {
    background-size: 1px 8px, 11px 1px;
}
.tree ul a {
    gap: 5px;
}
.tree .current {
    background: #d9d9d9;
}
.vscroll {
    flex: none;
    width: 17px;
    display: flex;
    flex-direction: column;
    align-items: center;
    background: #f0f0f0;
    color: #555;
}
.arrow {
    width: 10px;
    height: 10px;
    margin: 4px 0;
}
.vscroll .thumb {
    width: 15px;
    height: 42%;
    margin-bottom: auto;
    background: #cdcdcd;
}
.long .thumb {
    height: 54%;
}
.hscroll {
    display: flex;
    align-items: center;
    height: 17px;
    padding-right: 17px;
    background: #f0f0f0;
    color: #555;
}
.hscroll .arrow {
    margin: 0 4px;
}
.hscroll .thumb {
    width: 102px;
    height: 15px;
    margin-right: auto;
    background: #cdcdcd;
}
.content {
    flex: 1;
    min-width: 0;
    display: flex;
    flex-direction: column;
}
.component-tools {
    flex: none;
}
.component-tools label {
    margin-right: 6px;
}
.combo {
    display: flex;
    align-items: center;
    background: #fff;
}
.combo select {
    flex: 1;
    min-width: 0;
    appearance: none;
}
.floor-combo {
    width: 61px;
    height: 22px;
    padding: 0 4px 0 2px;
}
.find {
    padding-left: 5px;
}
.move {
    gap: 6px;
    padding: 0 4px;
}
.blue {
    color: #3c6fdc;
}
.grey {
    color: #b8b8b8;
}
.panels {
    flex: 1;
    min-height: 0;
    display: flex;
}
.component-panel {
    flex: none;
    width: 184px;
    margin: 5px 4px 1px 0;
    display: flex;
    flex-direction: column;
    gap: 1px;
}
.search {
    display: flex;
    background: #fff;
}
.search input {
    width: 158px;
    height: 24px;
    padding: 0 2px;
    border: 1px solid #777;
    background: #fff;
}
.search input::placeholder {
    color: #777;
    opacity: 1;
}
.search button {
    flex: 1;
    display: flex;
    align-items: center;
    justify-content: center;
}
.component-tree {
    flex: 1;
    border: 1px solid #828790;
    border-right-width: 2px;
    border-bottom-width: 2px;
    background: #fff;
}
.component-tree ul {
    background: none;
}
.component-tree ul li {
    padding-left: 40px;
}
.component-tree ul a {
    gap: 7px;
    padding-left: 4px;
}
.component-tree .picked {
    background: #316ac5;
}
.property-panel {
    flex: 1;
    min-width: 0;
    margin: 0 2px 1px 0;
    display: flex;
    flex-direction: column;
    background: #fff;
}
.tabs {
    display: flex;
    height: 20px;
    border-bottom: 1px solid #d9d9d9;
    background: #fff;
}
.tab {
    padding: 0 8px 0 7px;
    height: 20px;
    border: 1px solid #d9d9d9;
    border-width: 1px 1px 0 0;
    background: #fff;
}
.property-body {
    flex: 1;
    min-height: 0;
    display: flex;
    margin: 5px 2px 1px 4px;
    border: 1px solid #a0a0a0;
}
.sheet {
    flex: 1;
    min-width: 0;
    position: relative;
}
.props {
    width: 337px;
    table-layout: fixed;
    border-collapse: separate;
    border-spacing: 0;
    white-space: nowrap;
}
.props th, .props td {
    height: 19px;
    padding: 0;
    border: 1px solid #c0c0c0;
    border-width: 0 1px 1px 0;
    font-weight: normal;
    text-align: left;
    line-height: 16px;
}
.props thead th {
    height: 23px;
    text-align: center;
    background: linear-gradient(#fbfbfb, #ececec);
}
.props .num {
    width: 21px;
}
.props thead th:nth-child(2) {
    width: 191px;
}
.props thead .active {
    background: linear-gradient(#fbd795, #f2bd5f);
    color: #5a005a;
}
.props tbody th {
    text-align: center;
    background: linear-gradient(90deg, #fcfcfc, #ededed);
}
.props td {
    padding-left: 19px;
}
.props td + td {
    padding-left: 2px;
}
.props .blue {
    color: #0000ff;
}
.props .dim td, .props .parent td {
    color: #808080;
}
.props .selected th {
    background: #ffd283;
    color: #5a005a;
}
.props .selected td {
    background: #0078d7;
    color: #fff;
}
.props .selected td + td {
    background: #d9e9f8;
    color: #000;
}
.props .parent td:nth-child(2) {
    padding-left: 2px;
}
.props .parent button {
    width: 13px;
    height: 13px;
    margin-right: 4px;
    border: 1px solid #bbb;
    color: #000;
    font: 14px/9px "Liberation Sans", sans-serif;
}
.props .sub td:nth-child(2) {
    padding-left: 30px;
    background: linear-gradient(#bbb, #bbb) 8px 0 / 1px 100% no-repeat, linear-gradient(#bbb, #bbb) 8px 9px / 16px 1px no-repeat;
}
.props .last td:nth-child(2) {
    background-size: 1px 9px, 16px 1px;
}
.rebar {
    width: 10px;
    height: 10px;
    margin: 0 1px 0 2px;
    vertical-align: -1px;
}
.mark {
    position: absolute;
    left: 155px;
    top: 110px;
    width: 166px;
    height: 34px;
    border: 7px solid #f00;
}

/* Status bar */
.statusbar, .dialog-status {
    display: flex;
    gap: 2px;
}
.statusbar {
    flex: none;
    height: 21px;
}
.cell {
    padding: 1px 1px 0;
    border: 1px solid #d8d8d8;
    background: linear-gradient(#fdfdfd, #f2f2f2);
    white-space: nowrap;
}
.grow {
    flex: 1;
}
.s1 {
    width: 148px;
}
.s2 {
    width: 78px;
}
.s3 {
    width: 98px;
}
.s4 {
    width: 48px;
}
.s5 {
    width: 70px;
}

/* Section editor */
.dialog {
    position: absolute;
    left: 684px;
    top: 132px;
    right: 22px;
    bottom: 65px;
    display: flex;
    flex-direction: column;
    padding: 0 7px 7px;
    border: 1px solid #333;
    background: #b9d1ea;
    box-shadow: inset -1px -1px #45d0e8;
}
.dialog-title {
    flex: none;
    height: 30px;
    margin: 0 -6px 0 -7px;
    padding: 11px 7px 0;
    background: linear-gradient(#9ab5d3, #b9d1ea);
}
.dialog-body {
    flex: 1;
    min-height: 0;
    display: flex;
    flex-direction: column;
    gap: 2px;
    padding-top: 2px;
    background: #f0f0f0;
}
.dialog-frame {
    flex: 1;
    min-height: 0;
    display: flex;
    flex-direction: column;
    padding: 4px;
    border: 1px solid #d4d4d4;
    background: #fff;
}
.dialog-tools {
    flex: none;
    display: flex;
    align-items: center;
    height: 28px;
    padding-left: 3px;
    background: linear-gradient(#fdfdfd, #efefef);
    white-space: nowrap;
}
.dialog-tools button {
    height: 23px;
    padding: 0 4px;
    border: 1px solid transparent;
    line-height: 20px;
}
.dialog-tools .pressed {
    border-color: #0078d7;
    background: #e0ebf5;
}
.dialog-tools .sep {
    height: 14px;
}
.grip {
    width: 2px;
    height: 14px;
    margin-right: 2px;
    background: repeating-linear-gradient(#bbb 0 2px, transparent 2px 4px);
}
.info {
    color: #777;
    background: #f0f0f0;
}
.info label {
    margin: 0 2px 0 3px;
}
.bar-combo {
    width: 133px;
    height: 23px;
    padding: 0 4px 0 2px;
    border: 1px solid #777;
}
.canvas {
    flex: 1;
    min-height: 0;
    border: 2px solid #f00;
    background: #000;
}
.canvas svg {
    display: block;
    width: 100%;
    height: 100%;
    font: 12px "Liberation Mono", "Noto Sans CJK SC", monospace;
}
.canvas .key {
    font-size: 13px;
}
.grid path {
    stroke: #333;
    stroke-dasharray: 11 3 4 3;
}
.grid .main {
    stroke: #5a5a5a;
}
.ghost {
    fill: #484848;
}
.bars circle {
    fill: #000;
    stroke-width: 1;
}
.yellow circle {
    stroke: #ff0;
}
.magenta circle {
    stroke: #f0f;
}
.cyan circle {
    stroke: #0ff;
}
.cores {
    stroke-width: 3;
}
.stirrups {
    fill: none;
    stroke: #f00;
    stroke-width: 5;
}
.dims {
    fill: none;
    stroke: #0f0;
}
.white {
    fill: #fff;
}
.green {
    fill: #0f0;
}
.dialog-status {
    flex: none;
    height: 20px;
}
.hint {
    display: flex;
    justify-content: space-between;
    font-feature-settings: normal;
}
.hint svg {
    align-self: end;
}
.coords {
    width: 148px;
    padding-left: 7px;
}

/* Floating widgets */
.ime {
    position: absolute;
    left: 798px;
    top: 36px;
    display: flex;
    align-items: center;
    gap: 6px;
    height: 25px;
    padding-right: 3px;
    border: 1px solid #a9bad2;
    background: #fff;
    color: #1d72cc;
}
.ime b {
    font-size: 15px;
}
.ime-logo {
    width: 28px;
    height: 28px;
}
.ball {
    position: absolute;
    left: 936px;
    top: -28px;
    width: 47px;
    height: 47px;
    padding-top: 26px;
    border: 2px solid #ccc;
    border-radius: 50%;
    background: #3fc05c;
    box-shadow: inset 0 0 0 1px #188a40, 0 2px 6px #999;
    color: #fff;
    font-weight: bold;
    line-height: 16px;
    text-align: center;
}

/* Taskbar */
.taskbar {
    flex: none;
    display: flex;
    align-items: center;
    height: 40px;
    background: #03090c;
    color: #fff;
    white-space: nowrap;
}
.taskbar button {
    height: 40px;
    display: flex;
    align-items: center;
    justify-content: center;
}
.start {
    width: 48px;
    background: #000;
}
.task-search {
    width: 344px;
    height: 40px;
    display: flex;
    align-items: center;
    gap: 5px;
    padding: 0 14px 0 9px;
    background: #333;
}
.task-search input {
    flex: 1;
    min-width: 0;
    font-size: 14px;
}
.task-search input::placeholder {
    color: #999;
    opacity: 1;
}
.tview {
    width: 48px;
}
.pins {
    display: flex;
}
.pins button {
    width: 52px;
}
.pale {
    color: #e8eaec;
}
.tsep {
    width: 4px;
    height: 15px;
    margin: 0 4px;
    border: 1px solid #444;
    border-width: 0 1px;
}
.apps {
    display: flex;
    gap: 2px;
    margin: 0 10px 0 9px;
}
.apps button {
    width: 38px;
    border-bottom: 2px solid transparent;
}
.apps .running {
    border-bottom-color: #76b9ed;
}
.apps .active {
    background: #3a4245;
}
.edge {
    color: #0a78d4;
}
.ie {
    color: #4bb2ee;
}
.links {
    margin: 0 21px 0 5px;
}
.cpu, .clock {
    text-align: center;
    line-height: 18px;
}
.tray {
    display: flex;
    align-items: center;
    gap: 9px;
    margin-left: 19px;
}
.tray span {
    margin: 0 3px;
}
.clock {
    margin-left: auto;
}
.notice {
    width: 57px;
    margin-right: 4px;
    border-right: 1px solid #555;
}
.notice text {
    fill: #fff;
}
```
